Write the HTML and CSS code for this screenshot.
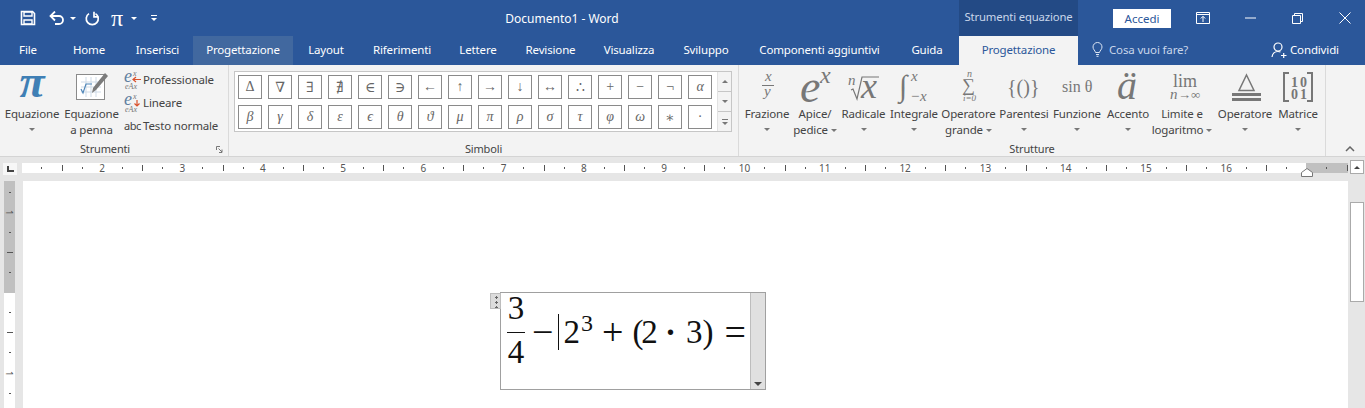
FILE: index.html
```html
<!DOCTYPE html>
<html lang="it">
<head>
    <meta charset="UTF-8">
    <meta name="viewport" content="width=device-width, initial-scale=1.0">
    <title>Documento1 - Word</title>
    <link rel="stylesheet" href="styles.css">
</head>
<body>
    <div class="titlebar">
        <div class="title-main">
            <div class="qat">
                <svg class="qat-save" width="16" height="16" viewBox="0 0 16 16"><path d="M1.500 1.500h11l2 2v11h-13z" fill="none" stroke="#fff" stroke-width="1.600"/><path d="M4 2h8v4H4zM4 10h8v4H4z" fill="none" stroke="#fff" stroke-width="1.400"/></svg>
                <svg class="qat-undo" width="16" height="14" viewBox="0 0 16 14"><path d="M2 5h8a4 4 0 0 1 0 8H6" fill="none" stroke="#fff" stroke-width="1.800"/><path d="M6 .5L1.500 5 6 9.500" fill="none" stroke="#fff" stroke-width="1.800"/></svg>
                <span class="caret caret-white qat-caret"></span>
                <svg class="qat-redo" width="15" height="15" viewBox="0 0 15 15"><path d="M4 2.600a6 6 0 1 0 6.500 0" fill="none" stroke="#fff" stroke-width="1.700"/><path d="M9 .8v5h4.600" fill="none" stroke="#fff" stroke-width="1.700"/></svg>
                <span class="qat-pi">π</span>
                <span class="caret caret-white qat-caret2"></span>
                <span class="qat-more"><span class="caret caret-white"></span></span>
            </div>
            <div class="doc-title">Documento1 - Word</div>
        </div>
        <div class="context-title">Strumenti equazione</div>
        <button class="signin">Accedi</button>
        <svg class="win-display" width="14" height="12" viewBox="0 0 14 12"><path d="M.5.5h13v11H.5zM.5 2.500h13" fill="none" stroke="#fff"/><path d="M7 10V4.500M4.800 6.500L7 4.300l2.200 2.200" fill="none" stroke="#fff"/></svg>
        <svg class="win-min" width="11" height="2" viewBox="0 0 11 2"><path d="M0 1h11" stroke="#fff"/></svg>
        <svg class="win-max" width="11" height="11" viewBox="0 0 11 11"><path d="M.5 2.500h8v8h-8zM2.500 2.500v-2h8v8h-2" fill="none" stroke="#fff"/></svg>
        <svg class="win-close" width="12" height="12" viewBox="0 0 12 12"><path d="M.5.5l11 11M11.500.5l-11 11" stroke="#fff"/></svg>
    </div>

    <div class="tabbar">
        <div class="tabs">
            <div class="tab">File</div>
            <div class="tab">Home</div>
            <div class="tab">Inserisci</div>
            <div class="tab tab-hover">Progettazione</div>
            <div class="tab">Layout</div>
            <div class="tab">Riferimenti</div>
            <div class="tab">Lettere</div>
            <div class="tab">Revisione</div>
            <div class="tab">Visualizza</div>
            <div class="tab">Sviluppo</div>
            <div class="tab">Componenti aggiuntivi</div>
            <div class="tab">Guida</div>
            <div class="tab tab-active">Progettazione</div>
        </div>
        <div class="tell-me">
            <svg width="11" height="15" viewBox="0 0 11 15"><path d="M3.500 10.500C3.200 8.500 1 7.500 1 5a4.500 4.500 0 0 1 9 0c0 2.500-2.200 3.500-2.500 5.500zM4 12.500h3M4.500 14.300h2" fill="none" stroke="#dbe5f3"/></svg>
            <span>Cosa vuoi fare?</span>
        </div>
        <div class="share">
            <svg width="16" height="16" viewBox="0 0 16 16"><circle cx="7" cy="5" r="4" fill="none" stroke="#fff" stroke-width="1.200"/><path d="M1 15c.5-3.500 2.500-5.500 6-5.500 1 0 1.800.2 2.500.5M10 13.500h5.500M12.700 11v5" fill="none" stroke="#fff" stroke-width="1.200"/></svg>
            <span>Condividi</span>
        </div>
    </div>

    <div class="ribbon">
        <section class="group group-tools">
            <div class="group-body tools-body">
                <div class="bigbtn btn-equation">
                    <div class="icon-slot"><span class="pi-icon">π</span></div>
                    <div class="label">Equazione</div>
                    <span class="caret caret-row"></span>
                </div>
                <div class="bigbtn btn-ink">
                    <div class="icon-slot">
                        <svg width="55" height="40" viewBox="64 66 55 40">
                            <rect x="76.500" y="74.500" width="28" height="25" fill="#fff" stroke="#8a8a8a"/>
                            <path d="M81 82h20M81 87h20M81 92h20M86 77v20M91 77v20M96 77v20" stroke="#cfdbe8"/>
                            <path d="M81 89l2 4 3-9h6" fill="none" stroke="#4f86b8" stroke-width="1.200"/>
                            <path d="M92 93l1-5 12-15 3 3-12 14z" fill="#7b7b7b"/>
                        </svg>
                    </div>
                    <div class="label">Equazione<br>a penna</div>
                </div>
                <div class="tool-list">
                    <div class="tool-row">
                        <svg class="tool-icon" width="18" height="20" viewBox="0 0 18 20">
                            <text x="0" y="12" class="mini-e">e</text><text x="9" y="6" class="mini-x">x</text>
                            <text x="1" y="19" class="mini-x">eAx</text>
                            <path d="M9 9.500h8M12 7l-3 2.500 3 2.500" fill="none" stroke="#d9512c" stroke-width="1.200"/>
                        </svg>
                        <span>Professionale</span>
                    </div>
                    <div class="tool-row">
                        <svg class="tool-icon" width="18" height="20" viewBox="0 0 18 20">
                            <text x="0" y="12" class="mini-e">e</text><text x="9" y="6" class="mini-x">x</text>
                            <text x="1" y="19" class="mini-x">eAx</text>
                            <path d="M13 7v6M10.500 10.500L13 13l2.500-2.500" fill="none" stroke="#d9512c" stroke-width="1.200"/>
                        </svg>
                        <span>Lineare</span>
                    </div>
                    <div class="tool-row">
                        <span class="abc">abc</span>
                        <span>Testo normale</span>
                    </div>
                </div>
            </div>
            <div class="group-label">
                Strumenti
                <svg class="launcher" width="7" height="7" viewBox="0 0 7 7"><path d="M.5 4V.5H4M2.500 2.500L6 6M6 3.500V6.500H3" fill="none" stroke="#777"/></svg>
            </div>
        </section>

        <section class="group group-symbols">
            <div class="group-body">
                <div class="gallery">
                    <div class="gallery-grid">
                        <span class="sym">Δ</span><span class="sym">∇</span><span class="sym">∃</span><span class="sym">∄</span>
                        <span class="sym">∈</span><span class="sym">∋</span><span class="sym">←</span><span class="sym">↑</span>
                        <span class="sym">→</span><span class="sym">↓</span><span class="sym">↔</span><span class="sym">∴</span>
                        <span class="sym">+</span><span class="sym">−</span><span class="sym">¬</span><span class="sym sym-it">α</span>
                        <span class="sym sym-it">β</span><span class="sym sym-it">γ</span><span class="sym sym-it">δ</span><span class="sym sym-it">ε</span>
                        <span class="sym sym-it">ϵ</span><span class="sym sym-it">θ</span><span class="sym sym-it">ϑ</span><span class="sym sym-it">μ</span>
                        <span class="sym sym-it">π</span><span class="sym sym-it">ρ</span><span class="sym sym-it">σ</span><span class="sym sym-it">τ</span>
                        <span class="sym sym-it">φ</span><span class="sym sym-it">ω</span><span class="sym">∗</span><span class="sym">·</span>
                    </div>
                    <div class="gallery-scroll">
                        <div class="scroll-btn"><span class="caret caret-up"></span></div>
                        <div class="scroll-btn"><span class="caret"></span></div>
                        <div class="scroll-btn scroll-more"><span class="more-bar"></span><span class="caret"></span></div>
                    </div>
                </div>
            </div>
            <div class="group-label">Simboli</div>
        </section>

        <section class="group group-structs">
            <div class="group-body structs-body">
                <div class="bigbtn">
                    <div class="icon-slot"><svg width="50" height="40" viewBox="742 66 50 40" class="struct">
                        <text x="765" y="81" class="s-it s15">x</text><path d="M762 85.500h12" stroke="#777"/><text x="764" y="96" class="s-it s15">y</text>
                    </svg></div>
                    <div class="label">Frazione</div><span class="caret caret-row"></span>
                </div>
                <div class="bigbtn">
                    <div class="icon-slot"><svg width="46" height="40" viewBox="792 66 46 40" class="struct">
                        <text x="800" y="102" class="s-it s46">e</text><text x="820" y="83" class="s-it s24">x</text>
                    </svg></div>
                    <div class="label">Apice/<br>pedice<span class="caret caret-inline"></span></div>
                </div>
                <div class="bigbtn">
                    <div class="icon-slot"><svg width="51" height="40" viewBox="838 66 51 40" class="struct">
                        <text x="848" y="85" class="s-it s15">n</text>
                        <path d="M851 90l2-1 4 10 5-22h17" fill="none" stroke="#777" stroke-width="1.200"/>
                        <text x="861" y="98" class="s-it s36">x</text>
                    </svg></div>
                    <div class="label">Radicale</div><span class="caret caret-row"></span>
                </div>
                <div class="bigbtn">
                    <div class="icon-slot"><svg width="50" height="40" viewBox="889 66 50 40" class="struct">
                        <text x="899" y="96" class="s-it s30">∫</text>
                        <text x="911" y="81" class="s-it s15">x</text><text x="910" y="101" class="s-it s15">−x</text>
                    </svg></div>
                    <div class="label">Integrale</div><span class="caret caret-row"></span>
                </div>
                <div class="bigbtn">
                    <div class="icon-slot"><svg width="59" height="40" viewBox="939 66 59 40" class="struct">
                        <text x="967" y="77" class="s-it s10">n</text><text x="962" y="91" class="s18">∑</text>
                        <text x="963" y="101" class="s-it s9">i=0</text>
                    </svg></div>
                    <div class="label">Operatore<br>grande<span class="caret caret-inline"></span></div>
                </div>
                <div class="bigbtn">
                    <div class="icon-slot"><svg width="52" height="40" viewBox="998 66 52 40" class="struct">
                        <text x="1007" y="94" class="s20">{()}</text>
                    </svg></div>
                    <div class="label">Parentesi</div><span class="caret caret-row"></span>
                </div>
                <div class="bigbtn">
                    <div class="icon-slot"><svg width="54" height="40" viewBox="1050 66 54 40" class="struct">
                        <text x="1062" y="92" class="s16">sin θ</text>
                    </svg></div>
                    <div class="label">Funzione</div><span class="caret caret-row"></span>
                </div>
                <div class="bigbtn">
                    <div class="icon-slot"><svg width="48" height="40" viewBox="1104 66 48 40" class="struct">
                        <text x="1117" y="99" class="s-it s40">ä</text>
                    </svg></div>
                    <div class="label">Accento</div><span class="caret caret-row"></span>
                </div>
                <div class="bigbtn">
                    <div class="icon-slot"><svg width="60" height="40" viewBox="1152 66 60 40" class="struct">
                        <text x="1173" y="87" class="s18">lim</text>
                        <text x="1170" y="99" class="s-it s15">n</text><text x="1178" y="99" class="s13">→∞</text>
                    </svg></div>
                    <div class="label">Limite e<br>logaritmo<span class="caret caret-inline"></span></div>
                </div>
                <div class="bigbtn">
                    <div class="icon-slot"><svg width="66" height="40" viewBox="1212 66 66 40" class="struct">
                        <path d="M1246.500 75l7.500 15.500h-15z" fill="none" stroke="#777" stroke-width="1.500"/>
                        <path d="M1232 93h29v3h-29zM1232 98h29v3h-29z" fill="#777"/>
                    </svg></div>
                    <div class="label">Operatore</div><span class="caret caret-row"></span>
                </div>
                <div class="bigbtn">
                    <div class="icon-slot"><svg width="40" height="40" viewBox="1278 66 40 40" class="struct">
                        <path d="M1289 73h-5v28h5M1307 73h5v28h-5" fill="none" stroke="#777" stroke-width="2"/>
                        <text x="1291" y="87" class="s14b">1</text><text x="1300" y="87" class="s14b">0</text>
                        <text x="1291" y="99" class="s14b">0</text><text x="1300" y="99" class="s14b">1</text>
                    </svg></div>
                    <div class="label">Matrice</div><span class="caret caret-row"></span>
                </div>
            </div>
            <div class="group-label">Strutture</div>
        </section>

        <div class="collapse">
            <svg width="10" height="6" viewBox="0 0 10 6"><path d="M1 5l4-4 4 4" fill="none" stroke="#666" stroke-width="1.500"/></svg>
        </div>
    </div>

    <div class="ruler-band">
        <div class="tab-stop"><span class="tab-stop-mark"></span></div>
        <div class="ruler">
            <div class="ruler-white">
                <div class="ruler-start"></div>
                <div class="ruler-cell">2</div><div class="ruler-cell">3</div><div class="ruler-cell">4</div>
                <div class="ruler-cell">5</div><div class="ruler-cell">6</div><div class="ruler-cell">7</div>
                <div class="ruler-cell">8</div><div class="ruler-cell">9</div><div class="ruler-cell">10</div>
                <div class="ruler-cell">11</div><div class="ruler-cell">12</div><div class="ruler-cell">13</div>
                <div class="ruler-cell">14</div><div class="ruler-cell">15</div><div class="ruler-cell">16</div>
                <div class="ruler-end"></div>
            </div>
            <div class="ruler-gray"></div>
            <svg class="indent" width="12" height="9" viewBox="0 0 12 9"><path d="M.5 8.500v-4l5.500-4 5.500 4v4z" fill="#fff" stroke="#777"/></svg>
        </div>
    </div>

    <div class="workspace">
        <div class="vruler">
            <div class="vruler-gray"><span class="vnum">1</span></div>
            <div class="vruler-white"><span class="vnum">1</span></div>
        </div>
        <div class="page">
            <div class="eq-box">
                <span class="eq-grip"></span>
                <div class="eq-content">
                    <span class="frac"><span class="frac-top">3</span><span class="frac-bottom">4</span></span>
                    <span class="eq-minus">−</span>
                    <span class="eq-cursor"></span>
                    <span>2</span><span class="eq-sup">3</span>
                    <span class="eq-plus">+</span>
                    <span class="eq-open">(2</span><span class="eq-dot">·</span><span>3)</span>
                    <span class="eq-equals">=</span>
                </div>
                <div class="eq-handle"><span class="caret caret-dark eq-caret"></span></div>
            </div>
        </div>
        <div class="scrollbar">
            <div class="scroll-up"><span class="caret caret-up caret-dark"></span></div>
            <div class="scroll-thumb"></div>
        </div>
    </div>
</body>
</html>
```

FILE: styles.css
```css
* {
    box-sizing: border-box;
}
html, body {
    margin: 0;
    height: 408px;
    overflow: hidden;
}
body {
    font-family: "Noto Sans", Arial, sans-serif;
    font-size: 11.500px;
    letter-spacing: -0.150px;
    color: #444;
    background: #e6e6e6;
}
svg text {
    letter-spacing: 0;
}

/* title bar */
.titlebar {
    display: flex;
    align-items: center;
    height: 36px;
    background: #2b579a;
    color: #fff;
}
.title-main {
    display: flex;
    align-items: center;
    width: 959px;
}
.qat {
    display: flex;
    align-items: center;
    width: 165px;
    padding-left: 20px;
}
.qat-undo {
    margin-left: 13px;
}
.qat-caret {
    margin-left: 5px;
}
.qat-redo {
    margin-left: 9px;
}
.qat-pi {
    width: 14px;
    margin-left: 11px;
    font: 24px/20px "Liberation Serif", serif;
}
.qat-caret2 {
    margin-left: 6px;
}
.qat-more {
    display: flex;
    flex-direction: column;
    align-items: center;
    width: 6px;
    margin-left: 14px;
    padding-top: 2px;
    border-top: 1px solid #fff;
}
.doc-title {
    flex: 1;
    font-size: 12px;
    letter-spacing: 0;
    text-align: center;
}
.context-title {
    width: 119px;
    height: 36px;
    line-height: 34px;
    text-align: center;
    background: #234a85;
    color: #c9d6ea;
    font-size: 11.300px;
}
.signin {
    width: 58px;
    height: 19px;
    margin-left: 35px;
    padding: 0;
    border: none;
    background: #fff;
    color: #2b579a;
    font: 11.500px "Noto Sans", Arial, sans-serif;
}
.win-display {
    margin-left: 25px;
}
.win-min {
    margin-left: 35px;
}
.win-max {
    margin-left: 36px;
}
.win-close {
    margin-left: 36px;
}

/* tabs */
.tabbar {
    display: flex;
    height: 29px;
    background: #2b579a;
    color: #fff;
}
.tabs {
    display: grid;
    grid-template-columns: 56px 66px 71px 100px 66px 86px 66px 79px 78px 76px 151px 64px 119px;
}
.tab {
    line-height: 27px;
    text-align: center;
    white-space: nowrap;
}
.tab-hover {
    background: #41689f;
}
.tab-active {
    background: #f3f3f3;
    color: #2b579a;
}
.tell-me {
    display: flex;
    align-items: center;
    gap: 6px;
    width: 178px;
    height: 27px;
    padding-left: 14px;
    color: #c9d6ea;
}
.share {
    display: flex;
    align-items: center;
    gap: 3px;
    height: 27px;
    padding-left: 15px;
}

/* ribbon */
.ribbon {
    display: flex;
    height: 92px;
    background: #f3f3f3;
    border-bottom: 1px solid #d4d4d4;
}
.group {
    display: flex;
    flex-direction: column;
    height: 91px;
    border-right: 1px solid #dadada;
}
.group-tools {
    width: 229px;
}
.group-symbols {
    width: 510px;
}
.group-structs {
    width: 587px;
}
.group-body {
    display: flex;
    height: 76px;
}
.tools-body {
    width: 228px;
}
.structs-body {
    padding-left: 3px;
}
.group-label {
    position: relative;
    height: 15px;
    line-height: 15px;
    font-size: 11px;
    text-align: center;
}
.group-tools .group-label {
    padding-right: 18px;
}
.launcher {
    position: absolute;
    right: 5px;
    top: 5px;
}
.bigbtn {
    display: flex;
    flex-direction: column;
    align-items: center;
    padding-top: 1px;
    white-space: nowrap;
}
.btn-equation {
    width: 64px;
}
.btn-ink {
    width: 55px;
}
.structs-body .bigbtn:nth-child(1) { width: 50px; }
.structs-body .bigbtn:nth-child(2) { width: 46px; }
.structs-body .bigbtn:nth-child(3) { width: 51px; }
.structs-body .bigbtn:nth-child(4) { width: 50px; }
.structs-body .bigbtn:nth-child(5) { width: 59px; }
.structs-body .bigbtn:nth-child(6) { width: 52px; }
.structs-body .bigbtn:nth-child(7) { width: 54px; }
.structs-body .bigbtn:nth-child(8) { width: 48px; }
.structs-body .bigbtn:nth-child(9) { width: 60px; }
.structs-body .bigbtn:nth-child(10) { width: 66px; }
.structs-body .bigbtn:nth-child(11) { width: 40px; }
.icon-slot {
    display: flex;
    justify-content: center;
    height: 40px;
}
.struct, .tool-icon {
    overflow: visible;
}
.label {
    line-height: 16px;
    text-align: center;
}
.pi-icon {
    font: bold italic 46px/32px "Liberation Serif", serif;
    color: #3f7fb5;
}
.caret {
    display: inline-block;
    width: 0;
    height: 0;
    border-left: 3px solid transparent;
    border-right: 3px solid transparent;
    border-top: 3px solid #777;
}
.caret-white {
    border-top-color: #fff;
}
.caret-up {
    border-top: none;
    border-bottom: 3px solid #777;
}
.caret-dark {
    border-top-color: #444;
}
.caret-up.caret-dark {
    border-bottom-color: #444;
}
.caret-row {
    margin-top: 6px;
}
.caret-inline {
    margin-left: 3px;
    vertical-align: middle;
}
.tool-list {
    display: flex;
    flex-direction: column;
    padding: 3px 0 0 5px;
}
.tool-row {
    display: flex;
    align-items: center;
    gap: 1px;
    height: 23px;
    white-space: nowrap;
}
.abc {
    width: 18px;
    font-size: 11px;
    letter-spacing: -0.500px;
}
.mini-e {
    font: italic 18px "Liberation Serif", serif;
    fill: #5f7f9f;
}
.mini-x {
    font: italic 8px "Liberation Serif", serif;
    fill: #777;
}

/* symbol gallery */
.group-symbols .group-body {
    padding: 6px 0 0 5px;
}
.gallery {
    display: flex;
    width: 498px;
    height: 61px;
    background: #fff;
    border: 1px solid #c6c6c6;
}
.gallery-grid {
    display: grid;
    grid-template-columns: repeat(16, 24px);
    grid-auto-rows: 24px;
    gap: 6px;
    width: 482px;
    padding: 3px;
}
.sym {
    display: flex;
    align-items: center;
    justify-content: center;
    border: 1px solid #8a8a8a;
    background: #fff;
    font: 14px "Liberation Serif", "DejaVu Serif", serif;
    color: #666;
}
.sym-it {
    font-style: italic;
}
.gallery-scroll {
    display: flex;
    flex-direction: column;
    width: 14px;
    background: #f3f3f3;
    border-left: 1px solid #e2e2e2;
}
.scroll-btn {
    display: flex;
    flex: 1;
    flex-direction: column;
    gap: 2px;
    align-items: center;
    justify-content: center;
    border-bottom: 1px solid #c6c6c6;
}
.scroll-more {
    border-bottom: none;
}
.more-bar {
    width: 6px;
    height: 1px;
    background: #777;
}
.collapse {
    display: flex;
    flex: 1;
    align-items: flex-end;
    justify-content: flex-end;
    height: 87px;
    padding-right: 10px;
}

/* rulers */
.ruler-band {
    display: flex;
    height: 24px;
    padding-top: 6px;
    background: #e6e6e6;
}
.tab-stop {
    display: flex;
    align-items: center;
    justify-content: center;
    width: 14px;
    height: 12px;
    margin-left: 3px;
    background: #f7f7f7;
}
.tab-stop-mark {
    width: 7px;
    height: 6px;
    border-left: 2px solid #444;
    border-bottom: 2px solid #444;
}
.ruler {
    position: relative;
    display: flex;
    height: 10px;
    margin-left: 5px;
    font-size: 10px;
    line-height: 10px;
    color: #555;
    letter-spacing: 0;
}
.ruler-white {
    display: flex;
    width: 1284px;
    background: #fff;
}
.ruler-start {
    width: 40px;
    background: linear-gradient(#555, #555) 19px 4px / 1px 2px no-repeat;
}
.ruler-cell {
    flex: none;
    width: 80.300px;
    text-align: center;
    background:
        linear-gradient(#555, #555) 0 2px / 1px 6px no-repeat,
        linear-gradient(#555, #555) 20px 4px / 1px 2px no-repeat,
        linear-gradient(#555, #555) 60px 4px / 1px 2px no-repeat;
}
.ruler-end {
    flex: 1;
    background:
        linear-gradient(#555, #555) 0 2px / 1px 6px no-repeat,
        linear-gradient(#555, #555) 20px 4px / 1px 2px no-repeat;
}
.ruler-gray {
    width: 42px;
    background:
        linear-gradient(#555, #555) 20px 4px / 1px 2px no-repeat,
        linear-gradient(#555, #555) 41px 2px / 1px 6px no-repeat,
        #c0c0c0;
}
.indent {
    position: absolute;
    left: 1279px;
    top: 5px;
}
.workspace {
    display: flex;
    height: 227px;
}
.vruler {
    display: flex;
    flex-direction: column;
    width: 23px;
    padding-left: 4px;
}
.vruler-gray, .vruler-white {
    width: 11px;
    text-align: center;
    font-size: 9px;
    color: #555;
}
.vruler-gray {
    height: 112px;
    padding-top: 24px;
    background:
        linear-gradient(#555, #555) 5px 11px / 2px 1px no-repeat,
        linear-gradient(#555, #555) 5px 51px / 2px 1px no-repeat,
        linear-gradient(#555, #555) 3px 71px / 6px 1px no-repeat,
        linear-gradient(#555, #555) 5px 91px / 2px 1px no-repeat,
        #c0c0c0;
}
.vruler-white {
    flex: 1;
    padding-top: 73px;
    background:
        linear-gradient(#555, #555) 5px 19px / 2px 1px no-repeat,
        linear-gradient(#555, #555) 3px 39px / 6px 1px no-repeat,
        linear-gradient(#555, #555) 5px 59px / 2px 1px no-repeat,
        linear-gradient(#555, #555) 5px 100px / 2px 1px no-repeat,
        #fff;
}
.vnum {
    display: block;
    height: 14px;
    line-height: 11px;
    writing-mode: vertical-rl;
}
.page {
    flex: 1;
    padding: 111px 0 0 477px;
    background: #fff;
}

/* equation */
.eq-box {
    position: relative;
    display: flex;
    width: 266px;
    height: 98px;
    background: #fff;
    border: 1px solid #a0a0a0;
}
.eq-grip {
    position: absolute;
    left: -11px;
    top: 0;
    width: 11px;
    height: 16px;
    background:
        radial-gradient(circle, #666 1.100px, transparent 1.300px) 0 1px / 11px 5px,
        #dcdcdc;
    border: 1px solid #bdbdbd;
}
.eq-content {
    display: flex;
    align-items: center;
    width: 249px;
    height: 78px;
    padding-left: 6px;
    font: 33px/40px "Liberation Serif", serif;
    letter-spacing: 0;
    color: #111;
    white-space: nowrap;
}
.frac {
    display: flex;
    flex-direction: column;
    align-items: center;
    width: 18px;
    margin-bottom: 4px;
}
.frac-top {
    width: 100%;
    padding-bottom: 5px;
    line-height: 38px;
    text-align: center;
    border-bottom: 1.500px solid #111;
}
.frac-bottom {
    line-height: 38px;
}
.eq-minus {
    margin-left: 7px;
    font-size: 38px;
}
.eq-cursor {
    width: 1px;
    height: 36px;
    margin-left: 5px;
    margin-right: 4px;
    background: #111;
}
.eq-sup {
    margin-left: 1px;
    margin-bottom: 18px;
    font-size: 24px;
    line-height: 24px;
}
.eq-plus {
    margin-left: 9px;
    margin-right: 9px;
    font-size: 38px;
}
.eq-open {
    letter-spacing: -2px;
}
.eq-dot {
    margin: 0 10px 0 9px;
    font-weight: bold;
}
.eq-equals {
    margin-left: 11px;
    font-size: 38px;
}
.eq-handle {
    display: flex;
    flex: 1;
    align-items: flex-end;
    justify-content: center;
    padding-bottom: 3px;
    background: #e0e0e0;
    border-left: 1px solid #bdbdbd;
}
.eq-caret {
    border-left-width: 4px;
    border-right-width: 4px;
    border-top-width: 4px;
}

/* scrollbar */
.scrollbar {
    display: flex;
    flex-direction: column;
    width: 17px;
    margin-top: -21px;
    padding: 0 1px 0 2px;
    background: #e6e6e6;
}
.scroll-up {
    display: flex;
    align-items: center;
    justify-content: center;
    height: 14px;
    background: #fff;
    border: 1px solid #aaa;
}
.scroll-thumb {
    height: 100px;
    margin-top: 28px;
    background: #fff;
    border: 1px solid #aaa;
}

/* icon text */
.struct text {
    font-family: "Liberation Serif", "DejaVu Serif", serif;
    fill: #777;
}
.s-it { font-style: italic; }
.s9 { font-size: 9px; }
.s10 { font-size: 10px; }
.s13 { font-size: 13px; }
.s14b { font-size: 14px; font-weight: bold; }
.s15 { font-size: 15px; }
.s16 { font-size: 16px; }
.s18 { font-size: 18px; }
.s20 { font-size: 20px; }
.s24 { font-size: 24px; }
.s30 { font-size: 30px; }
.s36 { font-size: 36px; }
.s40 { font-size: 40px; }
.s46 { font-size: 46px; }
```
